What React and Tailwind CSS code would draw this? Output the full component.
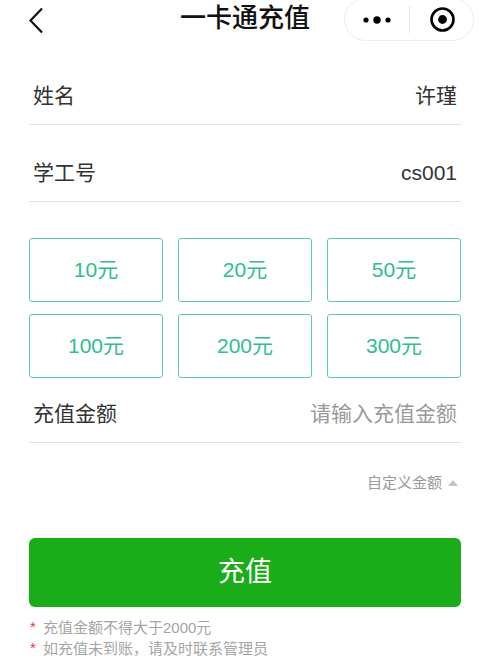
import React from "react";

const amounts = ["10元", "20元", "50元", "100元", "200元", "300元"];

export default function App() {
  return (
    <div
      className="w-[497px] h-[666px] bg-white overflow-hidden relative text-[#333]"
      style={{ fontFamily: '"Liberation Sans", "Noto Sans CJK SC", sans-serif' }}
    >
      {/* header */}
      <div className="relative h-[48px] flex items-center justify-center">
        <svg className="absolute left-[28px] top-[7px]" width="17" height="27" viewBox="0 0 17 27">
          <path d="M14 1.5 L2.5 13.5 L14 25.5" fill="none" stroke="#111" strokeWidth="2.2" />
        </svg>
        <div className="text-[26px] leading-none font-medium text-[#111] -mt-[12px] -ml-[7px]">一卡通充值</div>
        <div className="absolute left-[344px] top-[-2px] w-[130px] h-[43px] rounded-full border border-[#ececec] flex items-center">
          <svg className="ml-[17px]" width="30" height="10" viewBox="0 0 30 10">
            <circle cx="4" cy="5" r="2.6" fill="#000" />
            <circle cx="15" cy="5" r="3.7" fill="#000" />
            <circle cx="26" cy="5" r="2.6" fill="#000" />
          </svg>
          <div className="ml-[17px] w-px h-[27px] bg-[#e2e2e2]" />
          <svg className="ml-[19px]" width="27" height="27" viewBox="0 0 27 27">
            <circle cx="13.5" cy="13.5" r="11" fill="none" stroke="#000" strokeWidth="2.6" />
            <circle cx="13.5" cy="13.5" r="4.4" fill="#000" />
          </svg>
        </div>
      </div>

      <div className="pl-[29px] pr-[36px]">
        <div className="flex justify-between items-center pt-[37px] pb-[17px] border-b border-[#e3e3e3] text-[21px] leading-[22px]">
          <span className="pl-[4px]">姓名</span>
          <span className="pr-[4px]">许瑾</span>
        </div>
        <div className="flex justify-between items-center pt-[37px] pb-[17px] border-b border-[#e3e3e3] text-[21px] leading-[22px]">
          <span className="pl-[4px]">学工号</span>
          <span className="pr-[4px]">cs001</span>
        </div>

        <div className="grid grid-cols-3 gap-x-[15px] gap-y-[12px] mt-[36px]">
          {amounts.map((a) => (
            <div
              key={a}
              className="h-[64px] rounded-[3px] border border-[#5acda7] flex items-center justify-center text-[21px] text-[#2fbd8f]"
            >
              {a}
            </div>
          ))}
        </div>

        <div className="flex justify-between items-center pt-[25px] pb-[17px] border-b border-[#e3e3e3] text-[21px] leading-[22px]">
          <span className="pl-[4px]">充值金额</span>
          <span className="pr-[4px] text-[#9a9a9a]">请输入充值金额</span>
        </div>

        <div className="flex justify-end items-center mt-[30px] text-[15px] leading-[20px] text-[#9a9a9a]">
          <span>自定义金额</span>
          <svg className="ml-[5px] mr-[2px]" width="12" height="8" viewBox="0 0 12 8">
            <path d="M6 1 L11 7 L1 7 Z" fill="#c4c4c4" />
          </svg>
        </div>

        <button className="mt-[45px] w-full h-[69px] rounded-[6px] bg-[#1aad19] text-white text-[27px] flex items-center justify-center">
          充值
        </button>

        <div className="mt-[10px] text-[15px] leading-[21px] text-[#a5a5a5]">
          <div className="flex items-center">
            <span className="text-[#f43530] w-[14px] pl-[1px] -mt-[3px]">*</span>
            <span>充值金额不得大于2000元</span>
          </div>
          <div className="flex items-center">
            <span className="text-[#f43530] w-[14px] pl-[1px] -mt-[3px]">*</span>
            <span>如充值未到账，请及时联系管理员</span>
          </div>
        </div>
      </div>
    </div>
  );
}
